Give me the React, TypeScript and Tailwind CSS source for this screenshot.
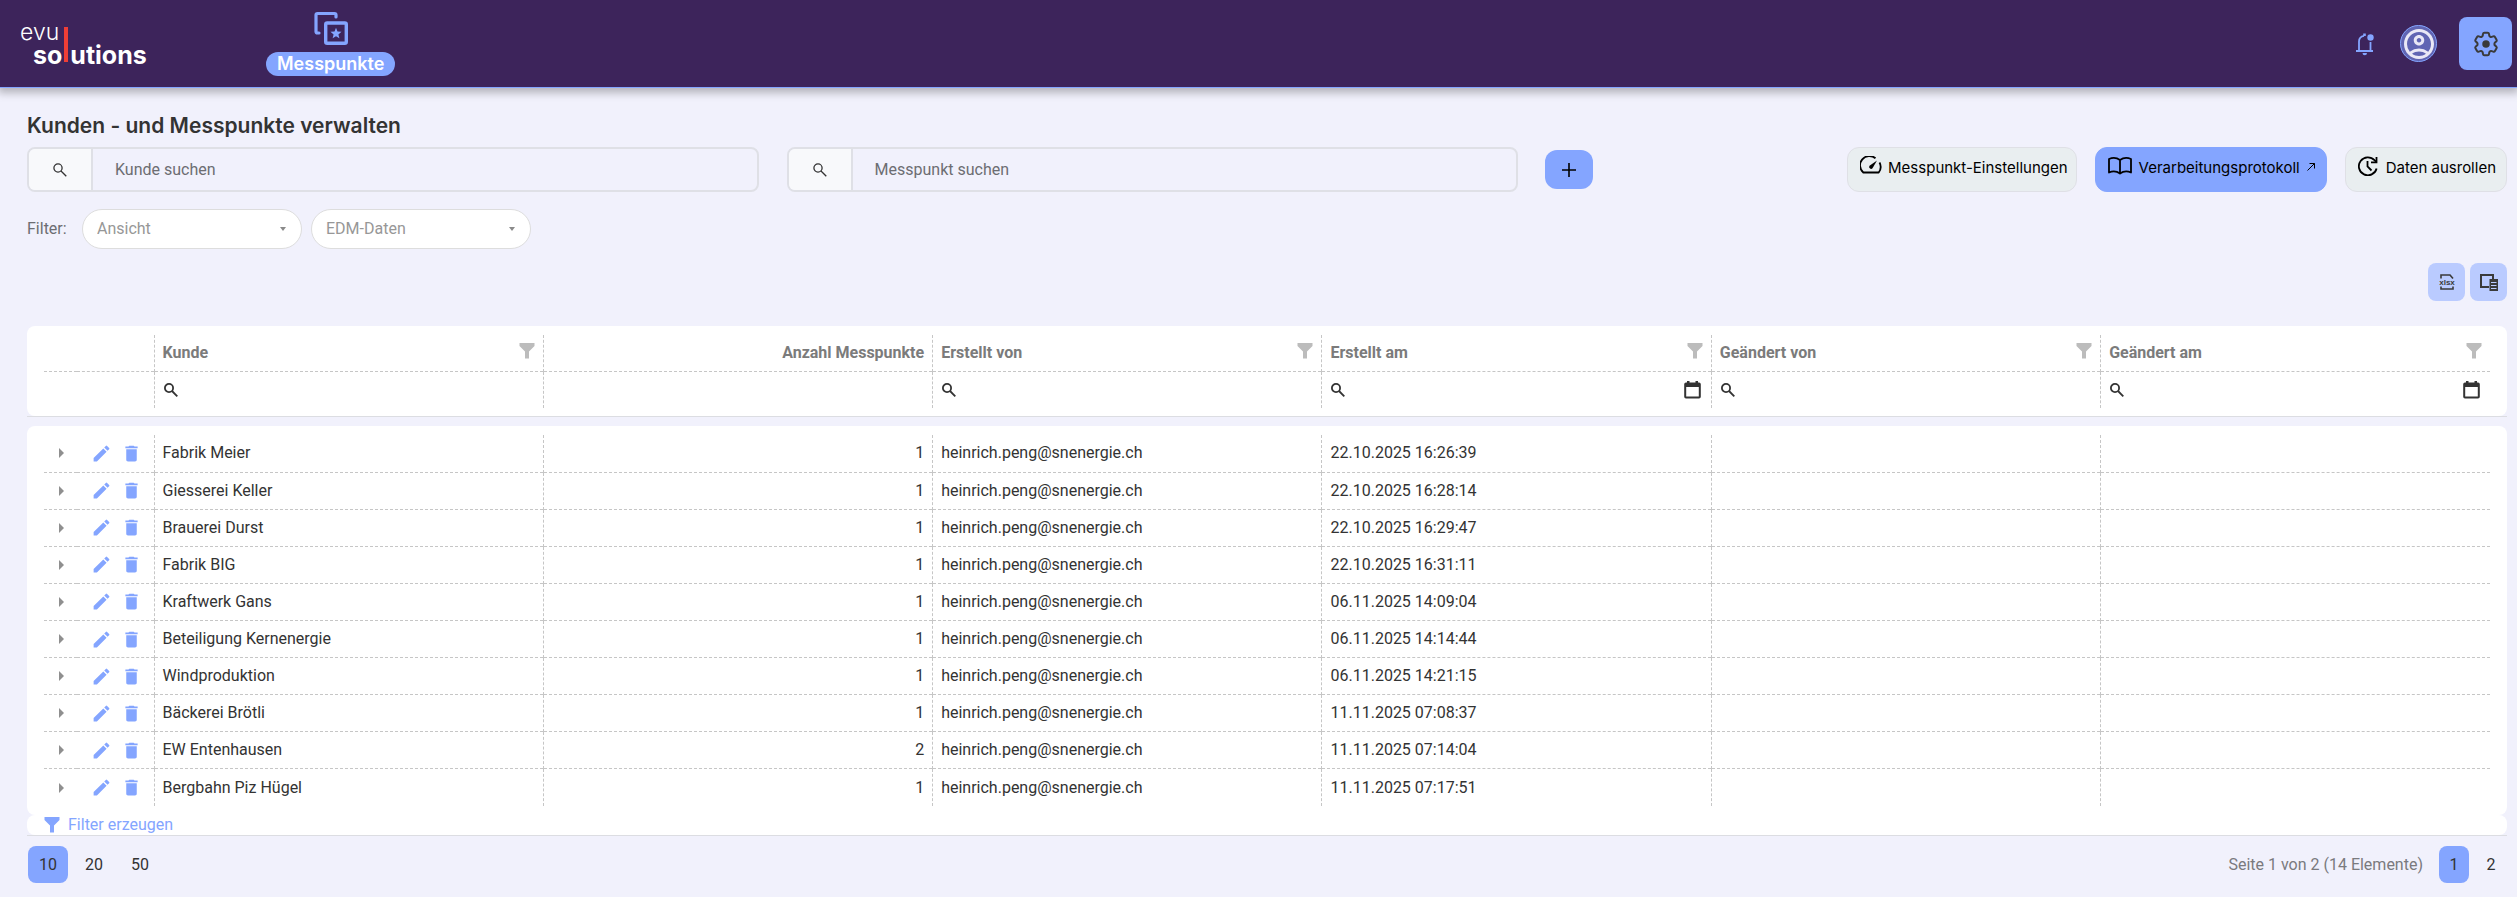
import { MdArrowRight, MdDelete, MdEdit, MdOutlineAccountCircle } from "react-icons/md";

const CREATOR = "heinrich.peng@snenergie.ch";

const CUSTOMERS = [
  { name: "Fabrik Meier", points: 1, createdAt: "22.10.2025 16:26:39" },
  { name: "Giesserei Keller", points: 1, createdAt: "22.10.2025 16:28:14" },
  { name: "Brauerei Durst", points: 1, createdAt: "22.10.2025 16:29:47" },
  { name: "Fabrik BIG", points: 1, createdAt: "22.10.2025 16:31:11" },
  { name: "Kraftwerk Gans", points: 1, createdAt: "06.11.2025 14:09:04" },
  { name: "Beteiligung Kernenergie", points: 1, createdAt: "06.11.2025 14:14:44" },
  { name: "Windproduktion", points: 1, createdAt: "06.11.2025 14:21:15" },
  { name: "Bäckerei Brötli", points: 1, createdAt: "11.11.2025 07:08:37" },
  { name: "EW Entenhausen", points: 2, createdAt: "11.11.2025 07:14:04" },
  { name: "Bergbahn Piz Hügel", points: 1, createdAt: "11.11.2025 07:17:51" },
];

const COLUMNS = [
  { label: "Kunde", filter: true, search: true },
  { label: "Anzahl Messpunkte", right: true },
  { label: "Erstellt von", filter: true, search: true },
  { label: "Erstellt am", filter: true, search: true, date: true },
  { label: "Geändert von", filter: true, search: true },
  { label: "Geändert am", filter: true, search: true, date: true },
];

const CELL = "border-l border-dashed border-[#c6c6c6] px-2";

function FunnelIcon({ className }: { className?: string }) {
  return (
    <svg viewBox="0 0 16 16" className={className} fill="currentColor">
      <path d="M.5 0h15v3L10 8.500V15.500H6V8.500L.5 3z" />
    </svg>
  );
}

function SearchIcon({ className, strokeWidth }: { className?: string; strokeWidth: string }) {
  return (
    <svg viewBox="0 0 14 14" className={className} fill="none" stroke="currentColor" strokeWidth={strokeWidth}>
      <circle cx="5" cy="5" r="4.100" />
      <path d="M8 8l5.300 5.300" />
    </svg>
  );
}

function CalendarIcon() {
  return (
    <svg viewBox="0 0 17 18" className="h-[18px] w-[17px]" fill="currentColor">
      <path d="M3 0h2.500v1.500h6V0H14v1.500h1a1.800 1.800 0 0 1 1.800 1.800v12.500A1.800 1.800 0 0 1 15 17.600H2A1.800 1.800 0 0 1 .2 15.800V3.300A1.800 1.800 0 0 1 2 1.500h1zM2.200 6v9.600h12.600V6z" fillRule="evenodd" />
    </svg>
  );
}

function ColumnWidths() {
  return (
    <colgroup>
      <col className="w-[33px]" />
      <col className="w-[77px]" />
      {COLUMNS.map((c) => (
        <col key={c.label} />
      ))}
    </colgroup>
  );
}

function Logo() {
  return (
    <a href="#" className="flex w-[266px] items-end pl-5 text-white" aria-label="evu solutions">
      <span className="flex flex-col">
        <span className="text-[23px] leading-[22px] font-light">evu</span>
        <span className="pl-[13px] text-[25px] leading-6 font-bold">so</span>
      </span>
      <span className="mx-[2px] mb-[5px] h-[35px] w-1 bg-[#ef3e36]" />
      <span className="text-[25px] leading-6 font-bold">utions</span>
    </a>
  );
}

function Header() {
  return (
    <header className="relative flex h-[88px] items-center border-b border-[#84a5ff] bg-[#3d245b] pr-[5px] shadow-[0_3px_8px_2px_rgba(0,0,0,0.25)]">
      <Logo />
      <a href="#" className="flex flex-col items-center gap-[7px] text-white">
        <svg viewBox="0 0 34 34" className="h-[34px] w-[34px] text-[#84a5ff]" fill="none" stroke="currentColor">
          <path d="M5 22H3.500Q2 22 2 20.500V4Q2 2.500 3.500 2.500H20.500Q22 2.500 22 4V6" strokeWidth="3.200" strokeLinecap="round" />
          <rect x="11.700" y="12" width="20.600" height="20.300" rx="1.500" strokeWidth="3.400" />
          <path
            d="M22 16.800l1.500 3.700 4 .3-3.100 2.600 1 3.900-3.400-2.100-3.400 2.100 1-3.900-3.100-2.600 4-.3z"
            fill="currentColor"
            stroke="none"
          />
        </svg>
        <span className="rounded-full bg-[#84a5ff] px-[11px] text-lg leading-6 font-semibold">Messpunkte</span>
      </a>
      <div className="ml-auto flex items-center">
        <button type="button" aria-label="Benachrichtigungen" className="mr-[25px]">
          <svg viewBox="0 0 20 24" className="h-6 w-5 text-[#84a5ff]" fill="none" stroke="currentColor" strokeWidth="1.800">
            <path d="M1 19H18M4 19V9.500C4 6.500 6 4.300 9 3.800M15.500 19V10" />
            <path d="M9.500 4V1.500" strokeWidth="2.600" />
            <path d="M7.500 21h4.500a2.250 2.250 0 0 1-4.500 0z" fill="currentColor" stroke="none" />
            <circle cx="15.500" cy="5.500" r="3.200" fill="currentColor" stroke="none" />
          </svg>
        </button>
        <button
          type="button"
          aria-label="Benutzerkonto"
          className="mr-[22px] flex size-[37px] items-center justify-center rounded-full border border-[#84a5ff] bg-[#6065b3] text-[#e9e8f6]"
        >
          <MdOutlineAccountCircle className="size-9 shrink-0" />
        </button>
        <button
          type="button"
          aria-label="Einstellungen"
          className="flex size-[53px] items-center justify-center rounded-lg bg-[#84a5ff] text-[#3a3a3a]"
        >
          <svg viewBox="0 0 24 24" className="size-[30px]" fill="none" stroke="currentColor" strokeWidth="1.600" strokeLinejoin="round">
            <path d="M9.594 3.940c.09-.542.56-.94 1.110-.94h2.593c.55 0 1.020.398 1.110.940l.213 1.281c.063.374.313.686.645.870.074.040.147.083.220.127.324.196.720.257 1.075.124l1.217-.456a1.125 1.125 0 0 1 1.370.490l1.296 2.247a1.125 1.125 0 0 1-.260 1.431l-1.003.827c-.293.240-.438.613-.431.992a6.759 6.759 0 0 1 0 .255c-.007.378.138.750.430.990l1.005.828c.424.350.534.954.260 1.430l-1.298 2.247a1.125 1.125 0 0 1-1.369.491l-1.217-.456c-.355-.133-.750-.072-1.076.124a6.570 6.570 0 0 1-.220.128c-.331.183-.581.495-.644.869l-.213 1.280c-.090.543-.560.941-1.110.941h-2.594c-.550 0-1.020-.398-1.110-.940l-.213-1.281c-.062-.374-.312-.686-.644-.870a6.520 6.520 0 0 1-.220-.127c-.325-.196-.720-.257-1.076-.124l-1.217.456a1.125 1.125 0 0 1-1.369-.490l-1.297-2.247a1.125 1.125 0 0 1 .260-1.431l1.004-.827c.292-.240.437-.613.430-.992a6.932 6.932 0 0 1 0-.255c.007-.378-.138-.750-.430-.990l-1.004-.828a1.125 1.125 0 0 1-.260-1.430l1.297-2.247a1.125 1.125 0 0 1 1.370-.491l1.216.456c.356.133.751.072 1.076-.124.072-.044.146-.087.220-.128.332-.183.582-.495.644-.869l.214-1.281Z" />
            <circle cx="12" cy="12" r="3" fill="currentColor" stroke="none" />
          </svg>
        </button>
      </div>
    </header>
  );
}

function SearchField({ id, label }: { id: string; label: string }) {
  return (
    <div className="flex h-[45px] w-[29.5%] overflow-hidden rounded-lg border-2 border-[#dfe0e6]">
      <label
        htmlFor={id}
        aria-label={label}
        className="flex w-16 shrink-0 items-center justify-center border-r-2 border-[#dfe0e6] bg-[#f8f9fb] text-[#333]"
      >
        <SearchIcon className="size-[14px]" strokeWidth="1.300" />
      </label>
      <input id={id} type="text" placeholder={label} className="min-w-0 flex-1 bg-transparent px-[22px] text-[#333] outline-none placeholder:text-[#6c6d72]" />
    </div>
  );
}

function FilterSelect({ label }: { label: string }) {
  return (
    <div className="relative w-[220px]">
      <select aria-label={label} className="h-10 w-full appearance-none rounded-full border border-[#dddddd] bg-white px-[14px] text-[#979797] outline-none">
        <option>{label}</option>
      </select>
      <svg viewBox="0 0 6 4" className="pointer-events-none absolute top-[18px] right-4 h-1 w-[6px]" fill="#8a8a8a">
        <path d="M0 0h6L3 4z" />
      </svg>
    </div>
  );
}

function Actions() {
  const base = "flex h-[45px] items-start rounded-xl border pt-2 text-[15px] leading-6 text-black";
  return (
    <div className="flex gap-[18px]">
      <button type="button" className={`${base} gap-[6px] border-[#dfe0e6] bg-[#e9eef0] pr-2 pl-3`}>
        <svg viewBox="0 0 22 18" className="h-[18px] w-[22px]" fill="none" stroke="currentColor" strokeWidth="1.800" strokeLinejoin="round">
          <path d="M15.500 2.300A9.300 9.300 0 0 0 3.300 16.500H18.700A9.300 9.300 0 0 0 19.500 6.500" />
          <path d="M17 4.500L12.500 12.300a2 2 0 0 1-3-2.600z" fill="currentColor" stroke="none" />
        </svg>
        Messpunkt-Einstellungen
      </button>
      <button type="button" className={`${base} gap-[7px] border-[#84a5ff] bg-[#84a5ff] pr-[11px] pl-3`}>
        <svg viewBox="0 0 24 18" className="mt-px h-[18px] w-6" fill="none" stroke="currentColor" strokeWidth="1.800" strokeLinejoin="round">
          <path d="M12 3Q7 -.5 1 2V15.500Q7 13 12 16.500Q17 13 23 15.500V2Q17 -.5 12 3V16.500" />
        </svg>
        Verarbeitungsprotokoll
        <svg viewBox="0 0 8 8" className="mt-[7px] size-2" fill="none" stroke="currentColor">
          <path d="M.5 7.500L7.500.5M2.500.5h5v5" />
        </svg>
      </button>
      <button type="button" className={`${base} gap-2 border-[#dfe0e6] bg-[#e9eef0] pr-[10px] pl-3`}>
        <svg viewBox="0 0 20 20" className="size-5" fill="none" stroke="currentColor" strokeWidth="1.800">
          <path d="M18.600 12.500A9 9 0 1 1 16.500 4.200L18.500 6" />
          <path d="M18.500 1v5.300H13M9.500 5v5.500l4 4" />
        </svg>
        Daten ausrollen
      </button>
    </div>
  );
}

function GridTools() {
  const base = "flex h-[38px] w-[37px] items-center justify-center rounded-lg bg-[#bacbff] text-[#3a3a3a]";
  return (
    <div className="mt-[14px] flex justify-end gap-[5px]">
      <button type="button" aria-label="Export" className={base}>
        <svg viewBox="0 0 16 16" className="size-4" fill="none" stroke="currentColor" strokeWidth="1.600">
          <path d="M2 4.500V1H11L14 4.500M2 12.500V15H14V12.500" />
          <text x="8" y="10.800" textAnchor="middle" fontSize="8" fontWeight="700" fill="currentColor" stroke="none" fontFamily="Liberation Sans, sans-serif">
            xlsx
          </text>
        </svg>
      </button>
      <button type="button" aria-label="Spalten" className={base}>
        <svg viewBox="0 0 18 17" className="h-[17px] w-[18px]" fill="none" stroke="currentColor" strokeWidth="2">
          <path d="M13 5V1H1V13H9" />
          <path d="M9.500 5h8.500v12H9.500z" fill="currentColor" stroke="none" />
          <path d="M11 8.500h5.500M11 11.500h5.500M11 14.500h5.500" stroke="#bacbff" strokeWidth="1" />
        </svg>
      </button>
    </div>
  );
}

function GridHead() {
  return (
    <div className="mt-[25px] border-b border-[#dcdde2]">
      <div className="rounded-lg bg-white pt-[9px] pr-[17px] pb-2 pl-[17px]">
        <table className="w-full table-fixed border-collapse">
          <ColumnWidths />
          <thead>
            <tr className="h-9 border-b border-dashed border-[#c6c6c6]">
              <td colSpan={2} />
              {COLUMNS.map((c) => (
                <th key={c.label} scope="col" className={`${CELL} font-bold text-[#7b7b7b]`}>
                  <div className={`flex items-start leading-6 ${c.right ? "justify-end" : "justify-between"}`}>
                    {c.label}
                    {c.filter && (
                      <button type="button" aria-label={`${c.label} filtern`}>
                        <FunnelIcon className="mt-[2px] size-4 text-[#bcbcbc]" />
                      </button>
                    )}
                  </div>
                </th>
              ))}
            </tr>
            <tr className="h-[37px]">
              <td colSpan={2} />
              {COLUMNS.map((c) => (
                <td key={c.label} className={CELL}>
                  {c.search && (
                    <div className="flex items-center pl-px text-[#333]">
                      <SearchIcon className="size-[14px] shrink-0" strokeWidth="1.800" />
                      <input type="text" aria-label={c.label} className="min-w-0 flex-1 bg-transparent px-1 outline-none" />
                      {c.date && (
                        <button type="button" aria-label={`${c.label} wählen`} className="mr-[2px]">
                          <CalendarIcon />
                        </button>
                      )}
                    </div>
                  )}
                </td>
              ))}
            </tr>
          </thead>
        </table>
      </div>
    </div>
  );
}

function GridBody() {
  return (
    <div className="mt-[9px] rounded-lg bg-white px-[17px] py-[9px]">
      <table className="h-[371px] w-full table-fixed border-collapse text-[#333]">
        <ColumnWidths />
        <tbody>
          {CUSTOMERS.map((c) => (
            <tr key={c.name} className="h-9 border-b border-dashed border-[#c6c6c6] last:border-b-0">
              <td>
                <button type="button" aria-label="Aufklappen" className="mx-auto block text-[#8f8f8f]">
                  <MdArrowRight className="size-6" />
                </button>
              </td>
              <td>
                <div className="flex items-center gap-[9px] pl-[14px] text-[#84a5ff]">
                  <button type="button" aria-label="Bearbeiten">
                    <MdEdit className="size-[21px]" />
                  </button>
                  <button type="button" aria-label="Löschen">
                    <MdDelete className="size-[21px]" />
                  </button>
                </div>
              </td>
              <td className={CELL}>{c.name}</td>
              <td className={`${CELL} text-right`}>{c.points}</td>
              <td className={CELL}>{CREATOR}</td>
              <td className={CELL}>{c.createdAt}</td>
              <td className={CELL} />
              <td className={CELL} />
            </tr>
          ))}
        </tbody>
      </table>
    </div>
  );
}

function Pager() {
  const base = "h-[37px] rounded-lg text-[#333]";
  return (
    <div className="mt-[10px] flex items-center pr-px pl-px">
      <div className="flex gap-[6px]">
        <button type="button" className={`${base} w-10 bg-[#84a5ff]`}>10</button>
        <button type="button" className={`${base} w-10`}>20</button>
        <button type="button" className={`${base} w-10`}>50</button>
      </div>
      <div className="ml-auto flex items-center gap-[7px]">
        <span className="mr-[9px] text-[#7a7a7e]">Seite 1 von 2 (14 Elemente)</span>
        <button type="button" className={`${base} w-[30px] bg-[#84a5ff]`}>1</button>
        <button type="button" className={`${base} w-[30px]`}>2</button>
      </div>
    </div>
  );
}

export default function App() {
  return (
    <div className="min-h-screen bg-[#f1f1fc] font-['Roboto',sans-serif] text-base">
      <div className="font-['Inter',sans-serif]">
        <Header />
      </div>
      <main className="pt-[22px] pr-[10px] pb-3 pl-[27px]">
        <h1 className="mb-[5px] font-['Inter',sans-serif] text-[21px] leading-8 font-semibold text-[#333]">
          Kunden - und Messpunkte verwalten
        </h1>
        <div className="flex items-center">
          <SearchField id="customer-search" label="Kunde suchen" />
          <span className="w-7" />
          <SearchField id="point-search" label="Messpunkt suchen" />
          <button type="button" aria-label="Hinzufügen" className="ml-[27px] flex h-[39px] w-12 items-center justify-center rounded-xl bg-[#84a5ff] text-black">
            <svg viewBox="0 0 14 14" className="size-[14px]" fill="none" stroke="currentColor" strokeWidth="1.600">
              <path d="M7 0v14M0 7h14" />
            </svg>
          </button>
          <div className="ml-auto font-['Inter',sans-serif]">
            <Actions />
          </div>
        </div>
        <div className="mt-[17px] flex items-center">
          <span className="w-[55px] text-[#6c6d72]">Filter:</span>
          <div className="flex gap-[9px]">
            <FilterSelect label="Ansicht" />
            <FilterSelect label="EDM-Daten" />
          </div>
        </div>
        <GridTools />
        <GridHead />
        <GridBody />
        <div className="border-b border-[#dcdde2]">
          <div className="rounded-lg bg-white pl-[17px]">
            <button type="button" className="flex h-5 items-center gap-2 leading-5 text-[#84a5ff]">
              <FunnelIcon className="size-4" />
              Filter erzeugen
            </button>
          </div>
        </div>
        <Pager />
      </main>
    </div>
  );
}
